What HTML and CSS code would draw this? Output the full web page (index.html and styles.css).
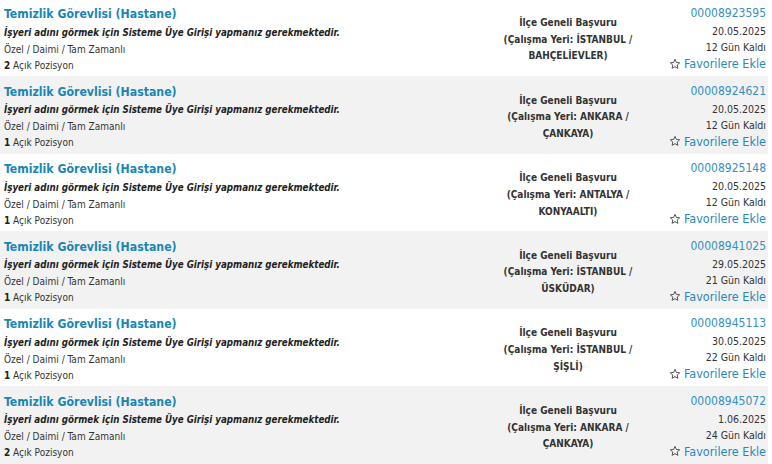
FILE: index.html
```html
<!DOCTYPE html>
<html lang="tr">
<head>
    <meta charset="UTF-8">
    <meta name="viewport" content="width=device-width, initial-scale=1.0">
    <title>İş İlanları</title>
    <link rel="stylesheet" href="styles.css">
</head>
<body>

    <div class="ilan-list">

        <div class="ilan">
            <div class="ilan-info">
                <a class="ilan-title" href="#">Temizlik Görevlisi (Hastane)</a>
                <p class="ilan-warn">İşyeri adını görmek için Sisteme Üye Girişi yapmanız gerekmektedir.</p>
                <p class="ilan-type">Özel / Daimi / Tam Zamanlı</p>
                <p class="ilan-count"><b>2</b> Açık Pozisyon</p>
            </div>
            <div class="ilan-place">İlçe Geneli Başvuru<br>(Çalışma Yeri: İSTANBUL /<br>BAHÇELİEVLER)</div>
            <div class="ilan-meta">
                <a class="ilan-no" href="#">00008923595</a>
                <span class="ilan-date">20.05.2025</span>
                <span class="ilan-left">12 Gün Kaldı</span>
                <a class="fav" href="#"><svg viewBox="0 0 24 24"><path d="M12 2.8l2.8 6.1 6.6.7-5 4.5 1.4 6.6L12 17.3l-5.8 3.4 1.4-6.6-5-4.5 6.6-.7z"/></svg>Favorilere Ekle</a>
            </div>
        </div>

        <div class="ilan">
            <div class="ilan-info">
                <a class="ilan-title" href="#">Temizlik Görevlisi (Hastane)</a>
                <p class="ilan-warn">İşyeri adını görmek için Sisteme Üye Girişi yapmanız gerekmektedir.</p>
                <p class="ilan-type">Özel / Daimi / Tam Zamanlı</p>
                <p class="ilan-count"><b>1</b> Açık Pozisyon</p>
            </div>
            <div class="ilan-place">İlçe Geneli Başvuru<br>(Çalışma Yeri: ANKARA /<br>ÇANKAYA)</div>
            <div class="ilan-meta">
                <a class="ilan-no" href="#">00008924621</a>
                <span class="ilan-date">20.05.2025</span>
                <span class="ilan-left">12 Gün Kaldı</span>
                <a class="fav" href="#"><svg viewBox="0 0 24 24"><path d="M12 2.8l2.8 6.1 6.6.7-5 4.5 1.4 6.6L12 17.3l-5.8 3.4 1.4-6.6-5-4.5 6.6-.7z"/></svg>Favorilere Ekle</a>
            </div>
        </div>

        <div class="ilan">
            <div class="ilan-info">
                <a class="ilan-title" href="#">Temizlik Görevlisi (Hastane)</a>
                <p class="ilan-warn">İşyeri adını görmek için Sisteme Üye Girişi yapmanız gerekmektedir.</p>
                <p class="ilan-type">Özel / Daimi / Tam Zamanlı</p>
                <p class="ilan-count"><b>1</b> Açık Pozisyon</p>
            </div>
            <div class="ilan-place">İlçe Geneli Başvuru<br>(Çalışma Yeri: ANTALYA /<br>KONYAALTI)</div>
            <div class="ilan-meta">
                <a class="ilan-no" href="#">00008925148</a>
                <span class="ilan-date">20.05.2025</span>
                <span class="ilan-left">12 Gün Kaldı</span>
                <a class="fav" href="#"><svg viewBox="0 0 24 24"><path d="M12 2.8l2.8 6.1 6.6.7-5 4.5 1.4 6.6L12 17.3l-5.8 3.4 1.4-6.6-5-4.5 6.6-.7z"/></svg>Favorilere Ekle</a>
            </div>
        </div>

        <div class="ilan">
            <div class="ilan-info">
                <a class="ilan-title" href="#">Temizlik Görevlisi (Hastane)</a>
                <p class="ilan-warn">İşyeri adını görmek için Sisteme Üye Girişi yapmanız gerekmektedir.</p>
                <p class="ilan-type">Özel / Daimi / Tam Zamanlı</p>
                <p class="ilan-count"><b>1</b> Açık Pozisyon</p>
            </div>
            <div class="ilan-place">İlçe Geneli Başvuru<br>(Çalışma Yeri: İSTANBUL /<br>ÜSKÜDAR)</div>
            <div class="ilan-meta">
                <a class="ilan-no" href="#">00008941025</a>
                <span class="ilan-date">29.05.2025</span>
                <span class="ilan-left">21 Gün Kaldı</span>
                <a class="fav" href="#"><svg viewBox="0 0 24 24"><path d="M12 2.8l2.8 6.1 6.6.7-5 4.5 1.4 6.6L12 17.3l-5.8 3.4 1.4-6.6-5-4.5 6.6-.7z"/></svg>Favorilere Ekle</a>
            </div>
        </div>

        <div class="ilan">
            <div class="ilan-info">
                <a class="ilan-title" href="#">Temizlik Görevlisi (Hastane)</a>
                <p class="ilan-warn">İşyeri adını görmek için Sisteme Üye Girişi yapmanız gerekmektedir.</p>
                <p class="ilan-type">Özel / Daimi / Tam Zamanlı</p>
                <p class="ilan-count"><b>1</b> Açık Pozisyon</p>
            </div>
            <div class="ilan-place">İlçe Geneli Başvuru<br>(Çalışma Yeri: İSTANBUL /<br>ŞİŞLİ)</div>
            <div class="ilan-meta">
                <a class="ilan-no" href="#">00008945113</a>
                <span class="ilan-date">30.05.2025</span>
                <span class="ilan-left">22 Gün Kaldı</span>
                <a class="fav" href="#"><svg viewBox="0 0 24 24"><path d="M12 2.8l2.8 6.1 6.6.7-5 4.5 1.4 6.6L12 17.3l-5.8 3.4 1.4-6.6-5-4.5 6.6-.7z"/></svg>Favorilere Ekle</a>
            </div>
        </div>

        <div class="ilan">
            <div class="ilan-info">
                <a class="ilan-title" href="#">Temizlik Görevlisi (Hastane)</a>
                <p class="ilan-warn">İşyeri adını görmek için Sisteme Üye Girişi yapmanız gerekmektedir.</p>
                <p class="ilan-type">Özel / Daimi / Tam Zamanlı</p>
                <p class="ilan-count"><b>2</b> Açık Pozisyon</p>
            </div>
            <div class="ilan-place">İlçe Geneli Başvuru<br>(Çalışma Yeri: ANKARA /<br>ÇANKAYA)</div>
            <div class="ilan-meta">
                <a class="ilan-no" href="#">00008945072</a>
                <span class="ilan-date">1.06.2025</span>
                <span class="ilan-left">24 Gün Kaldı</span>
                <a class="fav" href="#"><svg viewBox="0 0 24 24"><path d="M12 2.8l2.8 6.1 6.6.7-5 4.5 1.4 6.6L12 17.3l-5.8 3.4 1.4-6.6-5-4.5 6.6-.7z"/></svg>Favorilere Ekle</a>
            </div>
        </div>

    </div>

</body>
</html>
```

FILE: styles.css
```css
body {
    font-family: "DejaVu Sans Condensed", "DejaVu Sans", Verdana, sans-serif;
    font-stretch: condensed;
    color: #333;
    background: #fff;
    margin: 0;
    overflow: hidden;
}
a {
    text-decoration: none;
}
p {
    margin: 0;
}
.ilan-list {
    width: 768px;
    margin-top: -1.5px;
}
.ilan {
    display: grid;
    grid-template-columns: 1fr 170px 113px;
    height: 77.6px;
    box-sizing: border-box;
    padding: 6.5px 2px 0 4px;
}
.ilan:nth-child(even) {
    background-color: #f2f2f2;
}
.ilan-title {
    display: block;
    color: #1a86b4;
    font-weight: bold;
    font-size: 12.2px;
    line-height: 18px;
    margin-bottom: 1.5px;
}
.ilan-warn {
    font-size: 9.7px;
    line-height: 16px;
    margin-bottom: 1px;
    font-weight: bold;
    font-style: italic;
    color: #222;
}
.ilan-type, .ilan-count {
    font-size: 10px;
    line-height: 16px;
}
.ilan-count b {
    color: #222;
}
.ilan-place {
    align-self: center;
    margin-top: -1px;
    text-align: center;
    font-size: 10px;
    font-weight: bold;
    line-height: 16.7px;
    color: #333;
}
.ilan-meta {
    display: flex;
    flex-direction: column;
    align-items: flex-end;
    font-size: 10.5px;
    line-height: 16px;
}
.ilan-no {
    color: #3590bd;
    font-size: 12px;
    line-height: 17px;
    margin-bottom: 1px;
}
.fav {
    display: flex;
    align-items: center;
    gap: 3px;
    color: #2a88b8;
    font-size: 12.5px;
    line-height: 17px;
}
.fav svg {
    width: 12px;
    height: 12px;
    fill: none;
    stroke: #444;
    stroke-width: 1.8;
    stroke-linejoin: round;
}
```
